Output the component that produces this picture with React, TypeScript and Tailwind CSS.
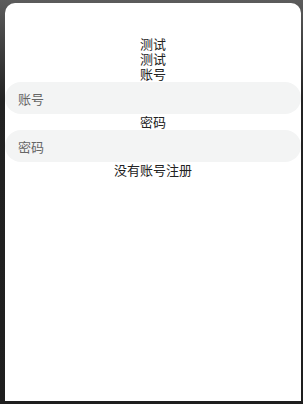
export default function App() {
  return (
    <div className="w-[303px] h-[404px] bg-gradient-to-b from-[#5c5c5c] via-[#222222] via-[25%] to-[#1e1e1e] pl-[5px] pt-[3px] pr-[2px] pb-[3px] font-['Noto_Sans_CJK_SC',sans-serif]">
      <div className="h-full bg-white rounded-t-[10px] flex flex-col items-center pt-[33px] text-[13px] leading-[15px] text-[#222]">
        <p>测试</p>
        <p>测试</p>
        <p>账号</p>
        <input
          placeholder="账号"
          className="mt-[1px] w-full h-[32px] rounded-full bg-[#f3f4f4] pl-[13px] text-[13px] outline-none placeholder:text-[#666]"
        />
        <p className="leading-[16px]">密码</p>
        <input
          placeholder="密码"
          type="password"
          className="w-full h-[32px] rounded-full bg-[#f3f4f4] pl-[13px] text-[13px] outline-none placeholder:text-[#666]"
        />
        <p className="leading-[16px]">没有账号注册</p>
      </div>
    </div>
  );
}
